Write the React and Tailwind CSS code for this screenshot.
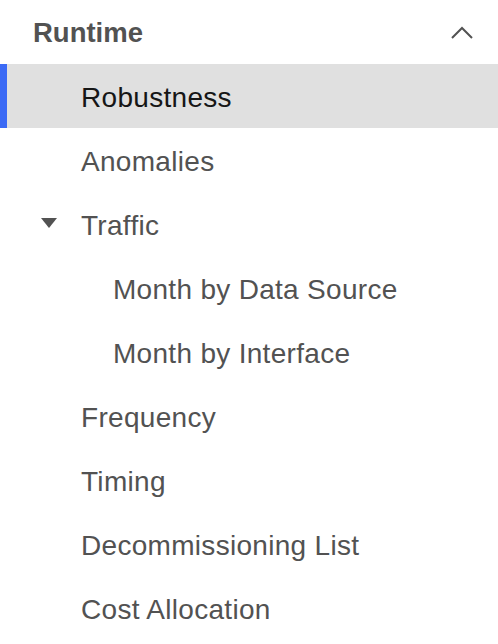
import React from "react";

const font = { fontFamily: '"Liberation Sans", Arial, sans-serif' };

function NavItem({ label, active, level = 1 }) {
    return (
        <div
            className={`relative flex items-center h-16 pt-[3px] ${active ? "bg-[#e0e0e0] text-[#161616]" : "text-[#525252]"}`}
        >
            {active && <div className="absolute left-0 top-0 bottom-0 w-[7px] bg-[#3b6af5]" />}
            <span className={`text-[28px] tracking-[0.3px] ${level === 2 ? "pl-[113px]" : "pl-[81px]"}`}>{label}</span>
        </div>
    );
}

export default function App() {
    return (
        <div className="w-[498px] h-[644px] bg-white" style={font}>
            {/* Category header */}
            <div className="flex items-center justify-between h-16 pt-[2px] pl-[33px] pr-[24px] text-[#525252]">
                <span className="text-[27.5px] font-bold">Runtime</span>
                <svg width="22" height="13" viewBox="0 0 22 13" className="mr-[1px] -mt-[2px]">
                    <path d="M1 12 L11 2 L21 12" fill="none" stroke="#525252" strokeWidth="2" />
                </svg>
            </div>

            <NavItem label="Robustness" active />
            <NavItem label="Anomalies" />

            {/* Expandable item */}
            <div className="relative flex items-center h-16 pt-[3px] text-[#525252]">
                <svg width="16" height="10" viewBox="0 0 16 10" className="absolute left-[41px] top-[26px]">
                    <path d="M0 0 L16 0 L8 10 Z" fill="#525252" />
                </svg>
                <span className="text-[28px] tracking-[0.3px] pl-[81px]">Traffic</span>
            </div>
            <NavItem label="Month by Data Source" level={2} />
            <NavItem label="Month by Interface" level={2} />

            <NavItem label="Frequency" />
            <NavItem label="Timing" />
            <NavItem label="Decommissioning List" />
            <NavItem label="Cost Allocation" />
        </div>
    );
}
